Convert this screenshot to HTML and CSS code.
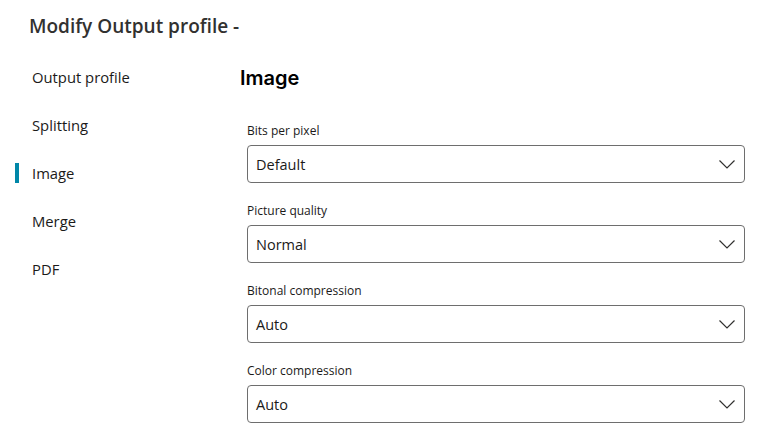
FILE: index.html
```html
<!DOCTYPE html>
<html>
<head>
<meta charset="utf-8">
<link rel="stylesheet" href="styles.css">
</head>
<body>
<div class="page">
  <h1 class="title">Modify Output profile -</h1>
  <div class="main">
    <nav class="nav">
      <div class="nav-item">Output profile</div>
      <div class="nav-item">Splitting</div>
      <div class="nav-item active">Image</div>
      <div class="nav-item">Merge</div>
      <div class="nav-item">PDF</div>
    </nav>
    <section class="content">
      <h2 class="heading">Image</h2>
      <div class="fields">
        <div class="field">
          <div class="label">Bits per pixel</div>
          <div class="select"><span>Default</span><svg class="chev" width="16" height="9" viewBox="0 0 16 9"><path d="M0.5 0.5 L8 8 L15.5 0.5" fill="none" stroke="#323130" stroke-width="1.2"/></svg></div>
        </div>
        <div class="field">
          <div class="label">Picture quality</div>
          <div class="select"><span>Normal</span><svg class="chev" width="16" height="9" viewBox="0 0 16 9"><path d="M0.5 0.5 L8 8 L15.5 0.5" fill="none" stroke="#323130" stroke-width="1.2"/></svg></div>
        </div>
        <div class="field">
          <div class="label">Bitonal compression</div>
          <div class="select"><span>Auto</span><svg class="chev" width="16" height="9" viewBox="0 0 16 9"><path d="M0.5 0.5 L8 8 L15.5 0.5" fill="none" stroke="#323130" stroke-width="1.2"/></svg></div>
        </div>
        <div class="field">
          <div class="label">Color compression</div>
          <div class="select"><span>Auto</span><svg class="chev" width="16" height="9" viewBox="0 0 16 9"><path d="M0.5 0.5 L8 8 L15.5 0.5" fill="none" stroke="#323130" stroke-width="1.2"/></svg></div>
        </div>
      </div>
    </section>
  </div>
</div>
</body>
</html>
```
FILE: styles.css
```css
html, body {
  margin: 0;
  padding: 0;
  background: #ffffff;
}
body {
  font-family: "Open Sans", "Noto Sans", sans-serif;
  color: #1b1a19;
}
.page {
  padding: 13px 0 0 0;
}
.title {
  margin: 0 0 0 29px;
  font-family: "Open Sans", sans-serif;
  font-weight: 600;
  font-size: 19px;
  line-height: 26px;
  color: #323130;
}
.main {
  display: flex;
  margin-top: 15px;
}
.nav {
  width: 240px;
  flex: none;
  display: flex;
  flex-direction: column;
}
.nav-item {
  height: 48px;
  line-height: 46px;
  padding-left: 32px;
  font-size: 14.8px;
  position: relative;
  color: #1b1a19;
}
.nav-item.active::before {
  content: "";
  position: absolute;
  left: 15px;
  top: 13px;
  width: 4px;
  height: 20px;
  background: #0087a8;
}
.content {
  flex: 1;
  padding-right: 20px;
}
.heading {
  margin: 0;
  height: 48px;
  line-height: 48px;
  font-family: "Inter", sans-serif;
  font-weight: 600;
  font-size: 20px;
  color: #000;
}
.fields {
  display: flex;
  flex-direction: column;
  gap: 4px;
  padding-left: 7px;
  margin-top: 21px;
}
.field {
  display: flex;
  flex-direction: column;
  height: 76px;
}
.label {
  font-size: 12px;
  line-height: 16px;
  color: #1b1a19;
  margin-bottom: 6px;
}
.select {
  height: 36px;
  border: 1px solid #6e6e6e;
  border-radius: 4px;
  display: flex;
  align-items: center;
  justify-content: space-between;
  padding: 0 9px 0 8px;
  font-size: 14.5px;
  color: #1b1a19;
}
.chev {
  display: block;
}
```
